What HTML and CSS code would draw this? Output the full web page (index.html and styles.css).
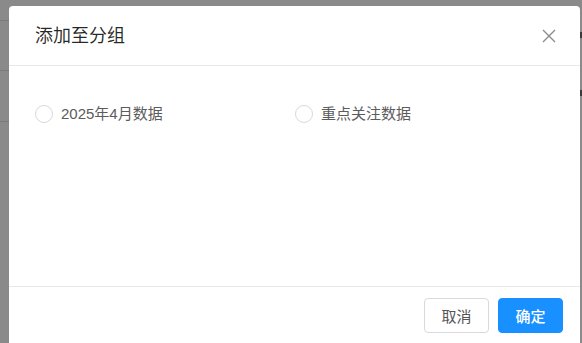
FILE: index.html
```html
<!DOCTYPE html>
<html lang="zh">
<head>
<meta charset="utf-8">
<link rel="stylesheet" href="styles.css">
</head>
<body>
<div class="page">
  <div class="bg-line bg-line-1"></div>
  <div class="bg-line bg-line-2"></div>
  <div class="bg-line bg-line-3"></div>
  <div class="bg-mark bg-mark-1"></div>
  <div class="bg-mark bg-mark-2"></div>
  <div class="modal">
    <div class="modal-header">
      <div class="modal-title">添加至分组</div>
      <button class="close" aria-label="关闭">
        <svg width="14" height="14" viewBox="0 0 14 14"><path d="M1 1 L13 13 M13 1 L1 13" stroke="#8c8c8c" stroke-width="1.4" fill="none"/></svg>
      </button>
    </div>
    <div class="modal-body">
      <label class="radio"><span class="radio-circle"></span><span class="radio-text">2025年4月数据</span></label>
      <label class="radio"><span class="radio-circle"></span><span class="radio-text">重点关注数据</span></label>
    </div>
    <div class="modal-footer">
      <button class="btn">取消</button>
      <button class="btn btn-primary">确定</button>
    </div>
  </div>
</div>
</body>
</html>
```

FILE: styles.css
```css
* { box-sizing: border-box; }
html, body { margin: 0; padding: 0; }
body {
  background: #8a8a8a;
  font-family: "Liberation Sans", "Noto Sans CJK SC", sans-serif;
  width: 582px;
  height: 343px;
  overflow: hidden;
}
.page {
  position: relative;
  width: 582px;
  height: 343px;
  padding: 6px 0 0 9px;
}
.bg-line {
  position: absolute;
  height: 1px;
  background: #7a7a7a;
}
.bg-line-1 { left: 0; top: 20px; width: 9px; }
.bg-line-2 { left: 0; top: 70px; width: 9px; }
.bg-line-3 { left: 0; top: 121px; width: 9px; }
.bg-mark {
  position: absolute;
  right: 0;
  width: 2px;
  height: 6px;
  background: #3a3a3a;
}
.bg-mark-1 { top: 32px; }
.bg-mark-2 { top: 90px; }
.modal {
  width: 571px;
  height: 337px;
  background: #fff;
  border-radius: 4px 4px 0 0;
  display: flex;
  flex-direction: column;
}
.modal-header {
  height: 60px;
  border-bottom: 1px solid #e8e8e8;
  display: flex;
  align-items: center;
  justify-content: space-between;
  padding: 0 24px 0 26px;
}
.modal-title {
  font-size: 18px;
  color: rgba(0,0,0,0.85);
  line-height: 22px;
}
.close {
  border: 0;
  background: none;
  padding: 0;
  width: 14px;
  height: 14px;
  display: flex;
}
.modal-body {
  height: 220px;
  padding: 37px 26px 0 26px;
  display: grid;
  grid-template-columns: 260px 260px;
  align-content: start;
}
.radio {
  display: flex;
  align-items: center;
  height: 22px;
  font-size: 15px;
  color: #5c5c5c;
}
.radio-circle {
  width: 18px;
  height: 18px;
  border: 1px solid #d9d9d9;
  border-radius: 50%;
  margin-right: 8px;
  flex: none;
}
.radio-text { line-height: 22px; }
.modal-footer {
  border-top: 1px solid #e8e8e8;
  padding: 11px 17px 0 0;
  display: flex;
  justify-content: flex-end;
  gap: 9px;
}
.btn {
  width: 65px;
  height: 35px;
  border: 1px solid #d9d9d9;
  border-radius: 4px;
  background: #fff;
  color: #555;
  font-family: inherit;
  font-size: 15px;
  padding: 0;
}
.btn-primary {
  background: #1890ff;
  border-color: #1890ff;
  color: #fff;
  font-weight: 500;
}
```
